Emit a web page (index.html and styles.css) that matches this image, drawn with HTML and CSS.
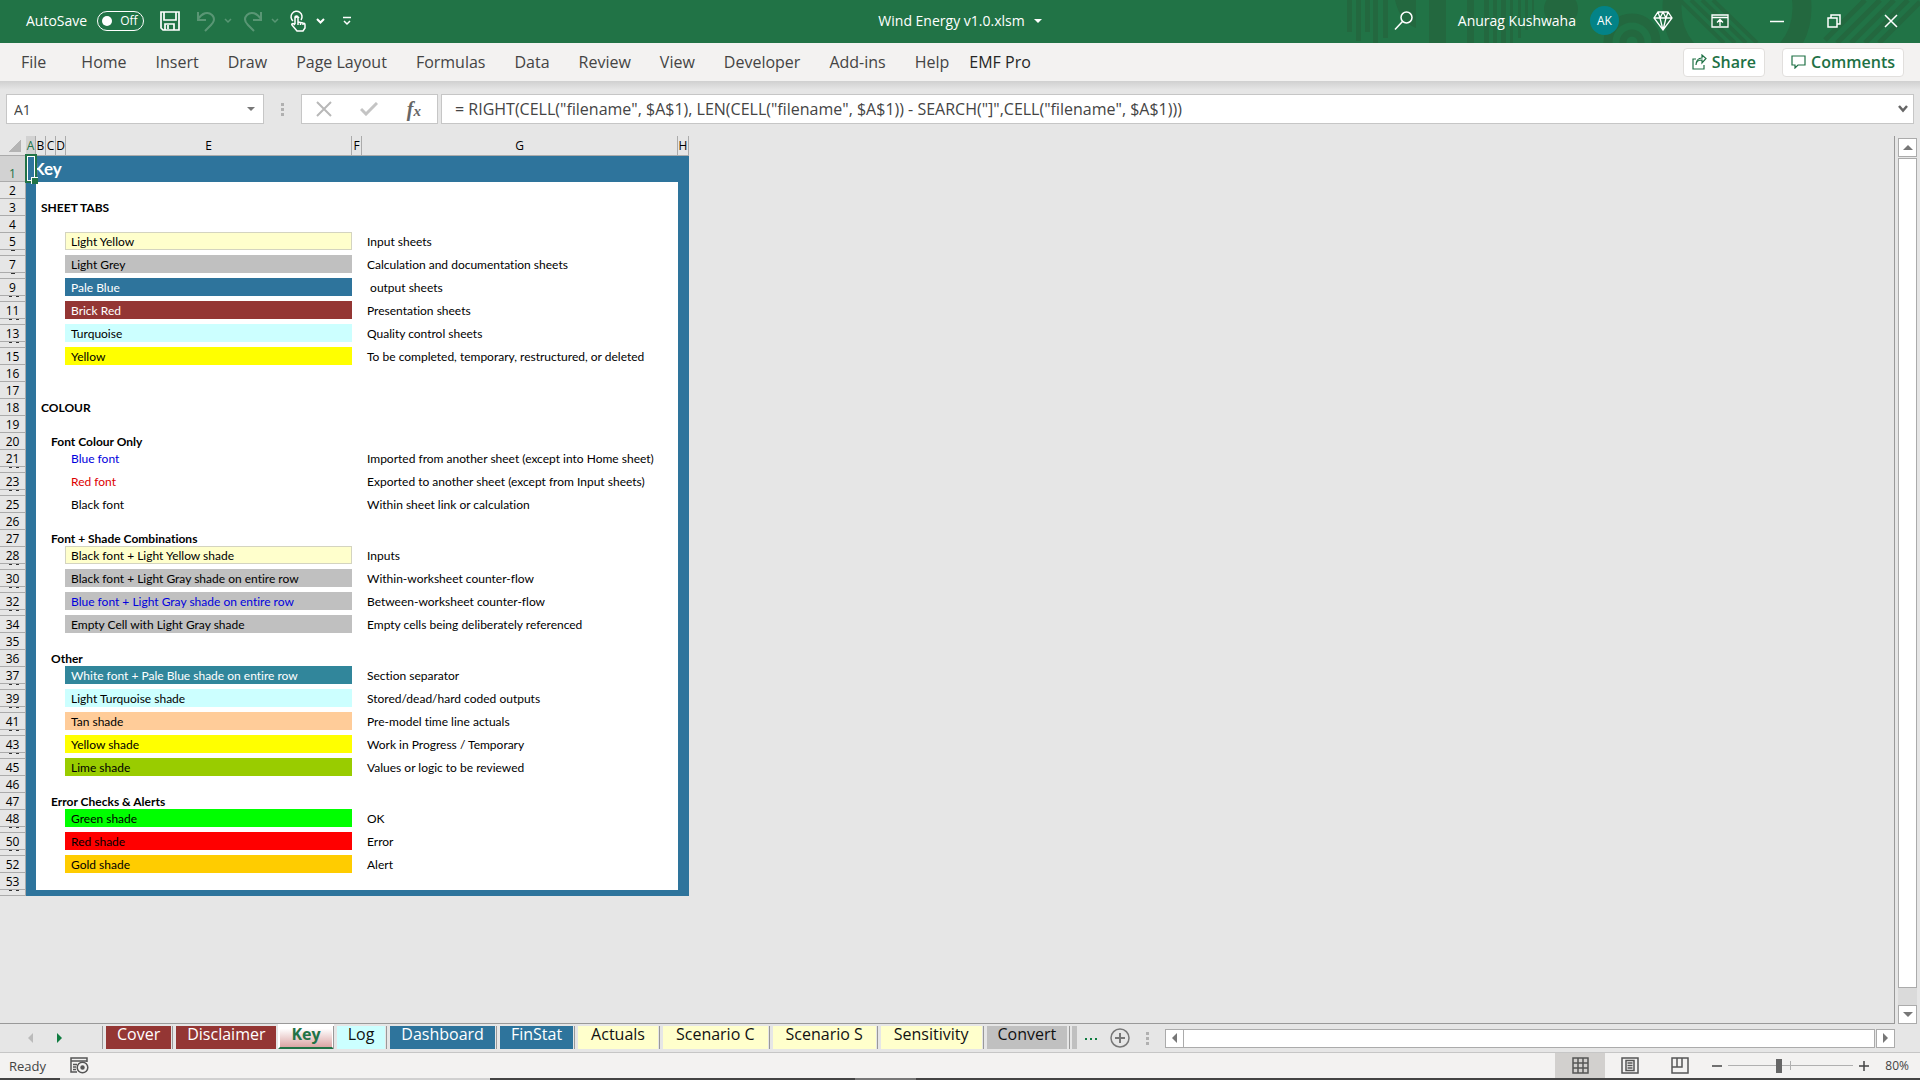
FILE: index.html
```html
<!DOCTYPE html>
<html lang="en">

<head>
    <meta charset="UTF-8">
    <meta name="viewport" content="width=device-width, initial-scale=1.0">
    <title>Wind Energy v1.0.xlsm</title>
    <link rel="stylesheet" href="styles.css">
</head>

<body>
    <header class="titlebar">
        <svg class="pattern" width="580" height="43" viewBox="0 0 580 43" aria-hidden="true">
            <g fill="#23683f">
                <path d="M7 0h5v32H7zM16 0h5v41h-5zM25 0h5v32h-5zM33 0h5v43h-5zM43 0h5v38h-5zM55 0h21v28q-16-6-21-28zM89 0h17v43H89zM127 0h7v43h-7zM144 0h5v43h-5zM153 0h4v43h-4zM161 0h5v43h-5zM170 0h3v43h-3zM178 0h3v38h-3zM185 0h3v30h-3zM192 0h2v20h-2z" />
                <circle cx="221" cy="9" r="17" />
            </g>
            <g fill="none" stroke="#23683f">
                <circle cx="292" cy="42" r="24" stroke-width="9" />
                <circle cx="292" cy="42" r="9" stroke-width="7" />
                <circle cx="397" cy="8" r="65" stroke-width="19" />
                <path d="M340 0l44 43M351 0l44 43M362 0l44 43M373 0l44 43" stroke-width="4" />
                <path d="M485 40l40-40M497 43l43-43M511 43l43-43M525 43l43-43M539 43l41-41" stroke-width="5" />
            </g>
        </svg>
        <div class="quick">
            <span id="autosave-label">AutoSave</span>
            <button class="toggle" aria-labelledby="autosave-label"><i></i>Off</button>
            <button class="icon save" aria-label="Save">
                <svg width="22" height="22" viewBox="0 0 22 22" fill="none" stroke="#fff" stroke-width="1.700"><path d="M2 2h18v18H4l-2-2zM5 2v8h12V2M6 20v-6h9v6M9 15v4" /></svg>
            </button>
            <button class="icon dim" aria-label="Undo">
                <svg width="20" height="22" viewBox="0 0 20 22" fill="none" stroke="#fff" stroke-width="2"><path d="M2 2v8h8M2 9C6 3 12 1 16 5c4 4 1 8-1 10l-6 6" /></svg>
                <svg width="8" height="6" viewBox="0 0 8 6" fill="none" stroke="#fff" stroke-width="1.5"><path d="M1 1l3 3 3-3" /></svg>
            </button>
            <button class="icon dim" aria-label="Redo">
                <svg width="20" height="22" viewBox="0 0 20 22" fill="none" stroke="#fff" stroke-width="2"><path d="M18 2v8h-8M18 9C14 3 8 1 4 5c-4 4-1 8 1 10l6 6" /></svg>
                <svg width="8" height="6" viewBox="0 0 8 6" fill="none" stroke="#fff" stroke-width="1.5"><path d="M1 1l3 3 3-3" /></svg>
            </button>
            <button class="icon touch" aria-label="Touch mode">
                <svg width="16" height="22" viewBox="0 0 16 22" fill="none" stroke="#fff" stroke-width="1.5"><path d="M3 11a5.500 5.500 0 1 1 8-1M5 8a2.500 2.500 0 0 1 4 0M5 14V7c0-1.500 3-1.500 3 0v5l5 1c1 0 2 1 2 2v3l-2 3H7l-5-6c-1-1 1-2 2-1l1 1M8 12v3M10.500 13v2M13 13v2" /></svg>
                <svg width="9" height="6" viewBox="0 0 9 6" fill="none" stroke="#fff" stroke-width="2"><path d="M1 1l3.500 3.500L8 1" /></svg>
            </button>
            <button class="icon" aria-label="Customize Quick Access Toolbar">
                <svg width="10" height="10" viewBox="0 0 10 10" fill="none" stroke="#fff" stroke-width="1.500"><path d="M1 1.500h8M2 5l3 3 3-3" /></svg>
            </button>
        </div>
        <h1 class="doc">Wind Energy v1.0.xlsm <i class="caret"></i></h1>
        <div class="account">
            <button class="icon" aria-label="Search">
                <svg width="20" height="20" viewBox="0 0 20 20" fill="none" stroke="#fff" stroke-width="1.500"><circle cx="12.500" cy="6.500" r="5.500" /><path d="M8.500 10.500L1 18.500" /></svg>
            </button>
            <span class="user">Anurag Kushwaha</span>
            <span class="avatar">AK</span>
            <button class="win" aria-label="Premium">
                <svg width="20" height="20" viewBox="0 0 20 20" fill="none" stroke="#fff" stroke-width="1.300"><path d="M5 1h10l4 6-9 12L1 7zM1 7h18M5 1l2 6 3 12 3-12 2-6M7 7l3-6 3 6" /></svg>
            </button>
            <button class="win" aria-label="Ribbon display options">
                <svg width="18" height="14" viewBox="0 0 18 14" fill="none" stroke="#fff" stroke-width="1.300"><path d="M1 1h16v12H1zM1 3.500h16M9 12V6M6 8.500L9 5.500l3 3" /></svg>
            </button>
            <button class="win" aria-label="Minimize">
                <svg width="14" height="14" viewBox="0 0 14 14" stroke="#fff" stroke-width="1.500"><path d="M0 7.500h14" /></svg>
            </button>
            <button class="win" aria-label="Restore">
                <svg width="14" height="14" viewBox="0 0 14 14" fill="none" stroke="#fff" stroke-width="1.500"><path d="M1 4h9v9H1zM4 4V1h9v9h-3" /></svg>
            </button>
            <button class="win" aria-label="Close">
                <svg width="14" height="14" viewBox="0 0 14 14" stroke="#fff" stroke-width="1.500"><path d="M1 1l12 12M13 1L1 13" /></svg>
            </button>
        </div>
    </header>

    <nav class="ribbon">
        <button>File</button>
        <button>Home</button>
        <button>Insert</button>
        <button>Draw</button>
        <button>Page Layout</button>
        <button>Formulas</button>
        <button>Data</button>
        <button>Review</button>
        <button>View</button>
        <button>Developer</button>
        <button>Add-ins</button>
        <button>Help</button>
        <button class="emf">EMF Pro</button>
        <div class="collab">
            <button class="pill"><svg width="15" height="16" viewBox="0 0 15 16" fill="none" stroke="#1e7145" stroke-width="1.200"><path d="M4 5H1v10h11v-4M4 11c0-4 2-5 6-5v3l4-4.500L10 1v3C6 4 4 7 4 11z" /></svg>Share</button>
            <button class="pill"><svg width="15" height="14" viewBox="0 0 15 14" fill="none" stroke="#1e7145" stroke-width="1.200"><path d="M1 1h13v9H7l-3 3v-3H1z" /></svg>Comments</button>
        </div>
    </nav>

    <div class="formulabar">
        <div class="namebox">
            <input type="text" value="A1" aria-label="Name box">
            <i class="caret"></i>
        </div>
        <i class="grip"></i>
        <div class="fxbox">
            <button aria-label="Cancel"><svg width="16" height="16" viewBox="0 0 16 16" stroke="#b8b8b8" stroke-width="2"><path d="M1 1l14 14M15 1L1 15" /></svg></button>
            <button aria-label="Enter"><svg width="18" height="14" viewBox="0 0 18 14" fill="none" stroke="#c4c4c4" stroke-width="3"><path d="M1 7l5 5L17 1" /></svg></button>
            <button class="fx" aria-label="Insert function">f<sub>x</sub></button>
        </div>
        <div class="formula">
            <input type="text" aria-label="Formula" value="= RIGHT(CELL(&quot;filename&quot;, $A$1), LEN(CELL(&quot;filename&quot;, $A$1)) - SEARCH(&quot;]&quot;,CELL(&quot;filename&quot;, $A$1)))">
            <svg width="10" height="8" viewBox="0 0 10 8" fill="none" stroke="#666" stroke-width="2.500"><path d="M1 1l4 4.500L9 1" /></svg>
        </div>
    </div>

    <main class="workspace">
        <div class="sheet">
            <table>
                <colgroup>
                    <col class="rowhead"><col class="narrow"><col class="narrow"><col class="narrow"><col class="narrow">
                    <col class="col-e"><col class="narrow"><col class="col-g"><col class="col-h">
                </colgroup>
                <thead>
                    <tr><th class="corner"></th><th class="active">A</th><th>B</th><th>C</th><th>D</th><th>E</th><th>F</th><th>G</th><th>H</th></tr>
                </thead>
                <tbody>
                    <tr class="title"><th class="active">1</th><td class="edge a1"><b>Key</b><i class="selection"></i></td><td class="edge" colspan="7"></td></tr>
                    <tr><th>2</th><td class="edge"></td><td colspan="6"></td><td class="edge"></td></tr>
                    <tr><th>3</th><td class="edge"></td><td class="head" colspan="6">SHEET TABS</td><td class="edge"></td></tr>
                    <tr><th>4</th><td class="edge"></td><td colspan="6"></td><td class="edge"></td></tr>
                    <tr><th>5</th><td class="edge"></td><td colspan="3"></td><td class="fill input">Light Yellow</td><td></td><td>Input sheets</td><td class="edge"></td></tr>
                    <tr class="gap one"><th aria-label="6"></th><td class="edge"></td><td colspan="6"></td><td class="edge"></td></tr>
                    <tr><th>7</th><td class="edge"></td><td colspan="3"></td><td class="fill grey">Light Grey</td><td></td><td>Calculation and documentation sheets</td><td class="edge"></td></tr>
                    <tr class="gap one"><th aria-label="8"></th><td class="edge"></td><td colspan="6"></td><td class="edge"></td></tr>
                    <tr><th>9</th><td class="edge"></td><td colspan="3"></td><td class="fill blue">Pale Blue</td><td></td><td>&nbsp;output sheets</td><td class="edge"></td></tr>
                    <tr class="gap"><th aria-label="10"></th><td class="edge"></td><td colspan="6"></td><td class="edge"></td></tr>
                    <tr><th>11</th><td class="edge"></td><td colspan="3"></td><td class="fill brick">Brick Red</td><td></td><td>Presentation sheets</td><td class="edge"></td></tr>
                    <tr class="gap"><th aria-label="12"></th><td class="edge"></td><td colspan="6"></td><td class="edge"></td></tr>
                    <tr><th>13</th><td class="edge"></td><td colspan="3"></td><td class="fill turquoise">Turquoise</td><td></td><td>Quality control sheets</td><td class="edge"></td></tr>
                    <tr class="gap"><th aria-label="14"></th><td class="edge"></td><td colspan="6"></td><td class="edge"></td></tr>
                    <tr><th>15</th><td class="edge"></td><td colspan="3"></td><td class="fill yellow">Yellow</td><td></td><td>To be completed, temporary, restructured, or deleted</td><td class="edge"></td></tr>
                    <tr><th>16</th><td class="edge"></td><td colspan="6"></td><td class="edge"></td></tr>
                    <tr><th>17</th><td class="edge"></td><td colspan="6"></td><td class="edge"></td></tr>
                    <tr><th>18</th><td class="edge"></td><td class="head" colspan="6">COLOUR</td><td class="edge"></td></tr>
                    <tr><th>19</th><td class="edge"></td><td colspan="6"></td><td class="edge"></td></tr>
                    <tr><th>20</th><td class="edge"></td><td></td><td class="head" colspan="5">Font Colour Only</td><td class="edge"></td></tr>
                    <tr><th>21</th><td class="edge"></td><td colspan="3"></td><td class="bluefont">Blue font</td><td></td><td>Imported from another sheet (except into Home sheet)</td><td class="edge"></td></tr>
                    <tr class="gap"><th aria-label="22"></th><td class="edge"></td><td colspan="6"></td><td class="edge"></td></tr>
                    <tr><th>23</th><td class="edge"></td><td colspan="3"></td><td class="redfont">Red font</td><td></td><td>Exported to another sheet (except from Input sheets)</td><td class="edge"></td></tr>
                    <tr class="gap"><th aria-label="24"></th><td class="edge"></td><td colspan="6"></td><td class="edge"></td></tr>
                    <tr><th>25</th><td class="edge"></td><td colspan="3"></td><td>Black font</td><td></td><td>Within sheet link or calculation</td><td class="edge"></td></tr>
                    <tr><th>26</th><td class="edge"></td><td colspan="6"></td><td class="edge"></td></tr>
                    <tr><th>27</th><td class="edge"></td><td></td><td class="head" colspan="5">Font + Shade Combinations</td><td class="edge"></td></tr>
                    <tr><th>28</th><td class="edge"></td><td colspan="3"></td><td class="fill input">Black font + Light Yellow shade</td><td></td><td>Inputs</td><td class="edge"></td></tr>
                    <tr class="gap"><th aria-label="29"></th><td class="edge"></td><td colspan="6"></td><td class="edge"></td></tr>
                    <tr><th>30</th><td class="edge"></td><td colspan="3"></td><td class="fill grey">Black font + Light Gray shade on entire row</td><td></td><td>Within-worksheet counter-flow</td><td class="edge"></td></tr>
                    <tr class="gap"><th aria-label="31"></th><td class="edge"></td><td colspan="6"></td><td class="edge"></td></tr>
                    <tr><th>32</th><td class="edge"></td><td colspan="3"></td><td class="fill grey bluefont">Blue font + Light Gray shade on entire row</td><td></td><td>Between-worksheet counter-flow</td><td class="edge"></td></tr>
                    <tr class="gap"><th aria-label="33"></th><td class="edge"></td><td colspan="6"></td><td class="edge"></td></tr>
                    <tr><th>34</th><td class="edge"></td><td colspan="3"></td><td class="fill grey">Empty Cell with Light Gray shade</td><td></td><td>Empty cells being deliberately referenced</td><td class="edge"></td></tr>
                    <tr><th>35</th><td class="edge"></td><td colspan="6"></td><td class="edge"></td></tr>
                    <tr><th>36</th><td class="edge"></td><td></td><td class="head" colspan="5">Other</td><td class="edge"></td></tr>
                    <tr><th>37</th><td class="edge"></td><td colspan="3"></td><td class="fill teal">White font + Pale Blue shade on entire row</td><td></td><td>Section separator</td><td class="edge"></td></tr>
                    <tr class="gap"><th aria-label="38"></th><td class="edge"></td><td colspan="6"></td><td class="edge"></td></tr>
                    <tr><th>39</th><td class="edge"></td><td colspan="3"></td><td class="fill turquoise">Light Turquoise shade</td><td></td><td>Stored/dead/hard coded outputs</td><td class="edge"></td></tr>
                    <tr class="gap"><th aria-label="40"></th><td class="edge"></td><td colspan="6"></td><td class="edge"></td></tr>
                    <tr><th>41</th><td class="edge"></td><td colspan="3"></td><td class="fill tan">Tan shade</td><td></td><td>Pre-model time line actuals</td><td class="edge"></td></tr>
                    <tr class="gap"><th aria-label="42"></th><td class="edge"></td><td colspan="6"></td><td class="edge"></td></tr>
                    <tr><th>43</th><td class="edge"></td><td colspan="3"></td><td class="fill yellow">Yellow shade</td><td></td><td>Work in Progress / Temporary</td><td class="edge"></td></tr>
                    <tr class="gap"><th aria-label="44"></th><td class="edge"></td><td colspan="6"></td><td class="edge"></td></tr>
                    <tr><th>45</th><td class="edge"></td><td colspan="3"></td><td class="fill lime">Lime shade</td><td></td><td>Values or logic to be reviewed</td><td class="edge"></td></tr>
                    <tr><th>46</th><td class="edge"></td><td colspan="6"></td><td class="edge"></td></tr>
                    <tr><th>47</th><td class="edge"></td><td></td><td class="head" colspan="5">Error Checks &amp; Alerts</td><td class="edge"></td></tr>
                    <tr><th>48</th><td class="edge"></td><td colspan="3"></td><td class="fill green">Green shade</td><td></td><td>OK</td><td class="edge"></td></tr>
                    <tr class="gap"><th aria-label="49"></th><td class="edge"></td><td colspan="6"></td><td class="edge"></td></tr>
                    <tr><th>50</th><td class="edge"></td><td colspan="3"></td><td class="fill red">Red shade</td><td></td><td>Error</td><td class="edge"></td></tr>
                    <tr class="gap"><th aria-label="51"></th><td class="edge"></td><td colspan="6"></td><td class="edge"></td></tr>
                    <tr><th>52</th><td class="edge"></td><td colspan="3"></td><td class="fill gold">Gold shade</td><td></td><td>Alert</td><td class="edge"></td></tr>
                    <tr><th>53</th><td class="edge"></td><td colspan="6"></td><td class="edge"></td></tr>
                    <tr class="gap"><th aria-label="54"></th><td class="edge" colspan="8"></td></tr>
                </tbody>
            </table>
        </div>
        <div class="vscroll">
            <button class="up" aria-label="Scroll up"></button>
            <div class="thumb"></div>
            <button class="down" aria-label="Scroll down"></button>
        </div>
    </main>

    <div class="tabbar">
        <div class="tabnav">
            <button class="prev" aria-label="Previous sheet"></button>
            <button class="next" aria-label="Next sheet"></button>
        </div>
        <div class="tabs">
            <button class="brick">Cover</button>
            <button class="brick">Disclaimer</button>
            <button class="current">Key</button>
            <button class="turquoise">Log</button>
            <button class="blue">Dashboard</button>
            <button class="blue">FinStat</button>
            <button class="input">Actuals</button>
            <button class="input">Scenario C</button>
            <button class="input">Scenario S</button>
            <button class="input">Sensitivity</button>
            <button class="grey">Convert</button>
            <i class="more-tab"></i>
        </div>
        <button class="more" aria-label="More sheets"><i></i><i></i><i></i></button>
        <button class="add" aria-label="New sheet">
            <svg width="20" height="20" viewBox="0 0 20 20" fill="none" stroke="#777"><circle cx="10" cy="10" r="9" stroke-width="1.500" /><path d="M10 5v10M5 10h10" stroke-width="2" /></svg>
        </button>
        <i class="grip"></i>
        <div class="hscroll">
            <button class="left" aria-label="Scroll left"></button>
            <div class="thumb"></div>
            <button class="right" aria-label="Scroll right"></button>
        </div>
    </div>

    <footer class="status">
        <span>Ready</span>
        <svg class="macro" width="19" height="17" viewBox="0 0 19 17" fill="none" stroke="#555" stroke-width="1.500"><path d="M7 15H1V1h16v4M1 4h16M3 7.500h4M3 10h3M3 12.500h3" /><circle cx="12.500" cy="10.500" r="5.300" /><circle cx="12.500" cy="10.500" r="1.500" fill="#555" /></svg>
        <div class="views">
            <button class="on" aria-label="Normal view"><svg width="17" height="17" viewBox="0 0 17 17" fill="none" stroke="#555" stroke-width="1.500"><path d="M1 1h15v15H1zM6 1v15M11 1v15M1 6h15M1 11h15" /></svg></button>
            <button aria-label="Page layout view"><svg width="18" height="17" viewBox="0 0 18 17" fill="none" stroke="#555" stroke-width="1.500"><path d="M1 1h16v15H1zM5 3.500h8v10H5zM6.500 6h5M6.500 8.500h5M6.500 11h5" /></svg></button>
            <button aria-label="Page break preview"><svg width="18" height="17" viewBox="0 0 18 17" fill="none" stroke="#555" stroke-width="1.500"><path d="M1 1h16v15H1zM1 10h10V1M6 1v9" /></svg></button>
        </div>
        <div class="zoom">
            <button aria-label="Zoom out"><svg width="10" height="10" viewBox="0 0 10 10" stroke="#444" stroke-width="1.500"><path d="M0 5h10" /></svg></button>
            <input type="range" min="0" max="100" value="40" aria-label="Zoom">
            <button aria-label="Zoom in"><svg width="10" height="10" viewBox="0 0 10 10" stroke="#444" stroke-width="1.500"><path d="M0 5h10M5 0v10" /></svg></button>
            <span>80%</span>
        </div>
    </footer>
    <div class="taskbar"><i class="light"></i><i class="seg"></i></div>
</body>

</html>
```
FILE: styles.css
```css
* {
    box-sizing: border-box;
}

body {
    margin: 0;
    height: 100vh;
    display: flex;
    flex-direction: column;
    overflow: hidden;
    background: #e6e6e6;
    font-family: "Open Sans", "Noto Sans", sans-serif;
    font-size: 14px;
    color: #444;
}

button {
    margin: 0;
    padding: 0;
    border: 0;
    background: none;
    font: inherit;
    color: inherit;
}

input {
    min-width: 0;
    margin: 0;
    padding: 0;
    border: 0;
    background: none;
    font: inherit;
    color: inherit;
    outline: none;
}

svg {
    display: block;
}

/* title bar */
.titlebar {
    position: relative;
    display: grid;
    grid-template-columns: 1fr auto 1fr;
    align-items: center;
    flex: none;
    height: 43px;
    padding-bottom: 2px;
    background: #217346;
    color: #fff;
}

.pattern {
    position: absolute;
    top: 0;
    right: 0;
}

.quick {
    display: flex;
    align-items: center;
    padding-left: 26px;
}

.toggle {
    display: flex;
    align-items: center;
    gap: 8px;
    width: 47px;
    height: 20px;
    margin-left: 10px;
    padding-left: 4px;
    border: 1px solid #fff;
    border-radius: 10px;
    font-size: 12px;
}

.toggle i {
    width: 10px;
    height: 10px;
    border-radius: 50%;
    background: #fff;
}

.icon {
    position: relative;
    display: flex;
    align-items: center;
    gap: 8px;
    margin-right: 12px;
}

.save {
    margin: 0 15px;
}

.dim {
    margin-right: 11px;
    opacity: .25;
}

.touch {
    gap: 10px;
    margin-right: 17px;
}

.caret {
    display: inline-block;
    border: 4px solid transparent;
    border-top-color: currentColor;
    border-bottom: 0;
}

.doc {
    display: flex;
    align-items: center;
    gap: 9px;
    margin: 0;
    font-size: 14px;
    font-weight: 400;
}

.account {
    position: relative;
    display: flex;
    align-items: center;
    justify-content: flex-end;
    padding-right: 1px;
}

.user {
    margin: 0 14px 0 32px;
}

.avatar {
    width: 29px;
    height: 29px;
    margin-right: 15px;
    border-radius: 50%;
    background: #038387;
    font-size: 12px;
    line-height: 29px;
    text-align: center;
}

.win {
    display: flex;
    justify-content: center;
    width: 57px;
}

/* ribbon */
.ribbon {
    display: flex;
    align-items: center;
    gap: 29px;
    flex: none;
    height: 38px;
    padding: 0 16px 0 21px;
    background: #f3f2f1;
    font-size: 16px;
}

.ribbon button:first-child {
    margin-right: 6px;
}

.ribbon .emf {
    margin-left: -9px;
    color: #262626;
}

.collab {
    display: flex;
    gap: 11px;
    margin-left: auto;
}

.collab .pill {
    display: flex;
    align-items: center;
    gap: 5px;
    height: 29px;
    margin: 0;
    padding: 0 8px;
    border: 1px solid #e1dfdd;
    border-radius: 4px;
    background: #fff;
    color: #1e7145;
    font-weight: 600;
}

/* formula bar */
.formulabar {
    display: flex;
    flex: none;
    height: 55px;
    padding: 13px 6px 12px;
    background: linear-gradient(#d0d0d0, #e6e6e6 9px);
    font-size: 16px;
}

.namebox,
.fxbox,
.formula {
    display: flex;
    align-items: center;
    border: 1px solid #c6c6c6;
    background: #fff;
}

.namebox {
    width: 258px;
    padding: 0 8px 0 7px;
    font-size: 14px;
}

.namebox input,
.formula input {
    flex: 1;
}

.namebox .caret {
    color: #777;
}

.grip {
    align-self: center;
    width: 3px;
    height: 13px;
    margin: 0 17px;
    background: repeating-linear-gradient(#b0b0b0 0 3px, transparent 3px 5px);
}

.fxbox {
    width: 137px;
    margin-right: 3px;
    justify-content: space-between;
    padding: 0 16px 0 14px;
}

.fx {
    font-family: "Liberation Serif", serif;
    font-size: 20px;
    font-style: italic;
    font-weight: 700;
    line-height: 20px;
    color: #666;
}

.fx sub {
    font-size: 15px;
    line-height: 0;
    vertical-align: 0;
}

.formula {
    flex: 1;
    padding: 0 5px 0 13px;
}

/* worksheet */
.workspace {
    display: flex;
    flex: 1;
    min-height: 0;
}

.sheet {
    flex: 1;
    overflow: hidden;
    border-bottom: 1px solid #999;
    border-right: 1px solid #999;
}

.sheet table {
    width: 689px;
    table-layout: fixed;
    border-spacing: 0;
    font-family: Lato, "Open Sans", sans-serif;
    font-size: 12px;
    font-variant-ligatures: none;
    line-height: 15px;
    color: #000;
}

.sheet tbody {
    background: #fff;
}

.rowhead {
    width: 26px;
}

.narrow {
    width: 10px;
}

.col-e {
    width: 286px;
}

.col-g {
    width: 316px;
}

.col-h {
    width: 11px;
}

.sheet th {
    height: 17px;
    padding: 0;
    border-right: 1px solid #ababab;
    border-bottom: 1px solid #ababab;
    background: #e6e6e6;
    font-family: "Open Sans", sans-serif;
    font-weight: 400;
    vertical-align: bottom;
}

.sheet thead th {
    height: 20px;
    vertical-align: middle;
}

.sheet .corner {
    background: linear-gradient(135deg, transparent 50%, #b4b4b4 50%) 8px 3px / 13px 13px no-repeat;
    border-right-color: transparent;
}

.sheet th.active {
    background: #d2d2d2;
    color: #217346;
}

.sheet td {
    height: 17px;
    padding: 0 0 1px 5px;
    vertical-align: bottom;
    white-space: nowrap;
}

.sheet td:empty {
    padding: 0;
}

.sheet .title th,
.sheet .title td {
    height: 26px;
}

.sheet td.edge {
    padding: 0;
    background: #2e749c;
}

.sheet td.a1 {
    position: relative;
    padding-left: 7px;
    color: #fff;
    font-size: 17px;
    line-height: 26px;
}

.selection {
    position: absolute;
    inset: -2px -1px -1px;
    border: 2px solid #217346;
    outline: 1px solid #fff;
    outline-offset: -3px;
    background: #2e749c;
}

.selection::after {
    content: '';
    position: absolute;
    right: -3px;
    bottom: -3px;
    width: 6px;
    height: 6px;
    border: 1px solid #fff;
    border-right: 0;
    border-bottom: 0;
    background: #217346;
}

.sheet .gap th,
.sheet .gap td {
    height: 6px;
    line-height: 0;
}

/* squeezed rows: only the tips of the row number show */
.sheet .gap th {
    background: linear-gradient(#333, #333) 9px 0 / 3px 1px no-repeat, linear-gradient(#333, #333) 16px 0 / 3px 1px no-repeat, #e6e6e6;
}

.sheet .gap.one th {
    background: linear-gradient(#333, #333) 11px 0 / 4px 1px no-repeat, #e6e6e6;
}

.sheet .head {
    font-weight: 700;
}

.input {
    --fill: #ffffcc;
}

.grey {
    --fill: #c0c0c0;
}

.blue {
    --fill: #2e749c;
    color: #fff;
}

.brick {
    --fill: #943634;
    color: #fff;
}

.turquoise {
    --fill: #ccffff;
}

.yellow {
    --fill: #ffff00;
}

.teal {
    --fill: #31869b;
    color: #fff;
}

.tan {
    --fill: #ffcc99;
}

.lime {
    --fill: #99cc00;
}

.green {
    --fill: #00ff00;
}

.red {
    --fill: #ff0000;
}

.gold {
    --fill: #ffcc00;
}

.sheet .fill {
    background: var(--fill);
    box-shadow: -1px -1px var(--fill), 0 -1px var(--fill), -1px 0 var(--fill);
}

.sheet .fill.input {
    box-shadow: inset -1px -1px #d4d4c0, -1px -1px #d4d4c0, 0 -1px #d4d4c0, -1px 0 #d4d4c0;
}

.bluefont {
    color: #0000dd;
}

.redfont {
    color: #dd0000;
}

/* scroll bars */
.vscroll {
    display: flex;
    flex-direction: column;
    width: 25px;
    padding: 2px 3px 0;
}

.vscroll button,
.hscroll button,
.vscroll .thumb,
.hscroll .thumb {
    display: flex;
    align-items: center;
    justify-content: center;
    border: 1px solid #ababab;
    background: #fff;
}

.vscroll button {
    height: 19px;
}

.vscroll .thumb {
    flex: 1;
    margin: 1px 0 17px;
    box-shadow: 0 17px #dadada;
}

.up::before,
.down::before,
.left::before,
.right::before,
.prev::before,
.next::before {
    content: '';
    border: 5px solid transparent;
}

.up::before {
    border-bottom-color: #777;
    border-top: 0;
}

.down::before {
    border-top-color: #777;
    border-bottom: 0;
}

.left::before,
.prev::before {
    border-right-color: #777;
    border-left: 0;
}

.right::before,
.next::before {
    border-left-color: #777;
    border-right: 0;
}

.prev::before {
    border-right-color: #bbb;
}

.next::before {
    border-left-color: #107c41;
}

/* sheet tabs */
.tabbar {
    display: flex;
    flex: none;
    height: 29px;
    border-bottom: 1px solid #c6c6c6;
}

.tabnav {
    display: flex;
    align-items: center;
    gap: 24px;
    width: 103px;
    padding-left: 28px;
}

.tabnav button {
    display: flex;
}

.tabs {
    display: flex;
    font-size: 16px;
}

.tabs button {
    height: 23px;
    margin: 2px 2px 0 3px;
    padding: 0 11px 7px;
    background: var(--fill);
    line-height: 16px;
}

.tabs .input,
.tabs .grey,
.tabs .turquoise {
    color: #111;
}

.tabs .input {
    padding-right: 13px;
    padding-left: 13px;
}

.tabs button:not(.current) {
    box-shadow: -3px 0 #e6e6e6, -4px 0 #999;
}

.tabs .current {
    height: 25px;
    margin: 0;
    padding-top: 2px;
    border: solid #fff;
    border-width: 0 2px;
    border-bottom: 2px solid #217346;
    background: linear-gradient(#fff 20%, #dba5a4);
    color: #217346;
    font-weight: 700;
}

.more-tab {
    width: 5px;
    height: 23px;
    margin: 2px 0 0 3px;
    background: #c0c0c0;
    box-shadow: -2px 0 #e6e6e6, -3px 0 #999;
}

.more {
    display: flex;
    align-items: center;
    gap: 3px;
    margin: 2px 13px 0 8px;
}

.more i {
    width: 2px;
    height: 2px;
    background: #107c41;
}

.tabbar .grip {
    margin: 0 16px;
}

.hscroll {
    display: flex;
    flex: 1;
    align-items: center;
    margin-right: 25px;
}

.hscroll button {
    width: 19px;
    height: 19px;
}

.hscroll .thumb {
    flex: 1;
    height: 19px;
    margin-right: 1px;
    border-left: 0;
}

/* status bar */
.status {
    display: flex;
    align-items: center;
    flex: none;
    height: 25px;
    padding: 0 11px 0 9px;
    background: #f3f2f1;
    font-size: 13px;
}

.macro {
    margin-left: 24px;
}

.views {
    display: flex;
    align-self: stretch;
    margin-left: auto;
}

.views button {
    display: flex;
    align-items: center;
    justify-content: center;
    width: 50px;
}

.views .on {
    background: #d2d0ce;
}

.zoom {
    display: flex;
    align-items: center;
    gap: 6px;
    margin-left: 7px;
}

.zoom span {
    margin-left: 10px;
    font-size: 12px;
}

.zoom input {
    appearance: none;
    width: 125px;
    height: 14px;
    background: linear-gradient(#b0b0b0, #b0b0b0) 62px 50% / 1px 9px no-repeat, linear-gradient(#b0b0b0, #b0b0b0) 0 50% / 100% 1px no-repeat;
}

.zoom input::-webkit-slider-thumb {
    appearance: none;
    width: 6px;
    height: 14px;
    background: #666;
}

.taskbar {
    display: flex;
    flex: none;
    height: 2px;
    background: #444;
}

.taskbar .light {
    width: 430px;
    margin-left: 60px;
    background: #d0d0d0;
}

.taskbar .seg {
    width: 61px;
    margin-left: 19%;
    background: #777;
}
```
